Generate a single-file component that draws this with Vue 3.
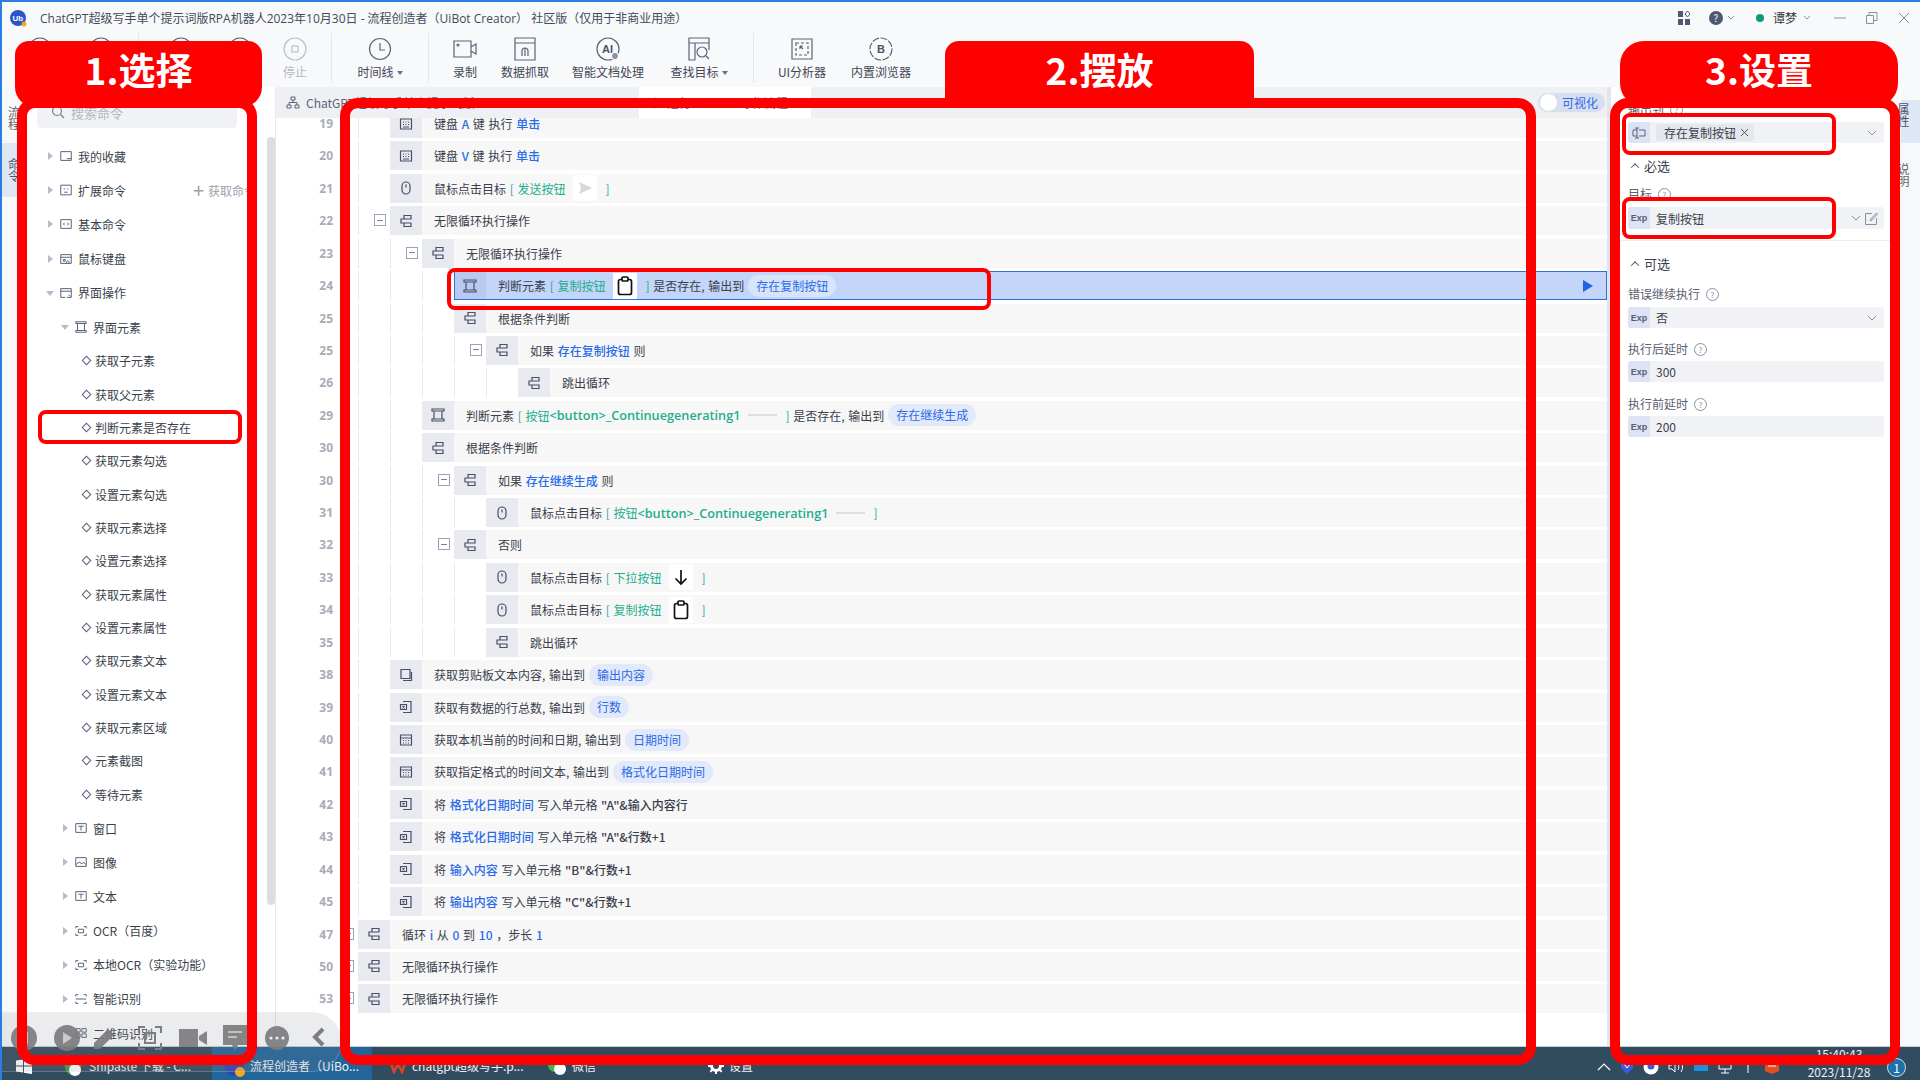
<script setup>
const flowIcons = {
  flow: 'M6 2.5h7v3.5H6zM6 10h7v3.5H6zM6 6H3v4h3',
  el: 'M2 2h12v2H2zM2 12h12v2H2zM4 4v8M12 4v8',
  mouse: 'M8 2a4 4 0 0 1 4 4v4a4 4 0 0 1-8 0V6a4 4 0 0 1 4-4zM8 4.5V7.5',
  kb: 'M2.5 3h11v10h-11zM5 6h1M7.5 6h1M10 6h1M5 8.5h1M7.5 8.5h1M10 8.5h1M5 11h6',
  cal: 'M2.5 3h11v10h-11zM2.5 6h11M5 8.5h1M7.5 8.5h1M10 8.5h1M5 11h1M7.5 11h1M10 11h1',
  copy: 'M3 2.5h9v9H3zM13.5 5v8.5H5',
  excel: 'M5 2.5h8v11H5M2.5 5.5h6v5h-6zM4.5 6.8l2 2.5M6.5 6.8l-2 2.5',
  folder: 'M2 3h12v10H2zM9 11h5',
  chat: 'M2 2.5h12v11H2zM6 6v1.5M10 6v1.5M6 10.5h4',
  code: 'M2 3h12v10H2zM6.5 6.5L5 8l1.5 1.5M9.5 6.5L11 8l-1.5 1.5',
  win: 'M2 3h12v10H2zM2 6h12M5 8.5h2v2H5zM10 10a1.5 1.5 0 1 0 .01 0',
  window: 'M2 3h12v10H9M2 3v10h5M2 6h12M11 10l2 2',
  img: 'M2 3h12v10H2zM2 11l4-3 3 2 2-1.5 3 2.5',
  text: 'M2 3h12v10H2zM5 6h6M8 6v5',
  scan: 'M2 5V3h3M11 3h3v2M2 11v2h3M14 11v2h-3M5 6h6v4H5z',
  aiscan: 'M2 5V3h3M11 3h3v2M2 11v2h3M14 11v2h-3M2 8h12',
  qr: 'M2 3h5v4H2zM9 3h5v4H9zM2 9h5v4H2zM9 9h5v4H9z',
}

const g = t => ({ t, k: 'g' })
const gl = t => ({ t, k: 'g latin' })
const b = t => ({ t, k: 'b' })
const d = t => ({ t, k: 'd' })
const pill = t => ({ t, k: 'pill' })
const thumb = kind => ({ thumb: kind })
const p = t => ({ t })

const rows = [
  { n: 19, d: 1, i: 'kb', parts: [p('键盘 '), b('A'), p(' 键 执行 '), b('单击')] },
  { n: 20, d: 1, i: 'kb', parts: [p('键盘 '), b('V'), p(' 键 执行 '), b('单击')] },
  { n: 21, d: 1, i: 'mouse', parts: [p('鼠标点击目标 '), g('[ 发送按钮'), thumb('send'), g(']')] },
  { n: 22, d: 1, i: 'flow', fold: true, parts: [p('无限循环执行操作')] },
  { n: 23, d: 2, i: 'flow', fold: true, parts: [p('无限循环执行操作')] },
  { n: 24, d: 3, i: 'el', sel: true, parts: [p('判断元素 '), g('[ 复制按钮'), thumb('clip'), g(']'), p(' 是否存在, 输出到'), pill('存在复制按钮')] },
  { n: 25, d: 3, i: 'flow', parts: [p('根据条件判断')] },
  { n: 25, d: 4, i: 'flow', fold: true, parts: [p('如果 '), b('存在复制按钮'), p(' 则')] },
  { n: 26, d: 5, i: 'flow', parts: [p('跳出循环')] },
  { n: 29, d: 2, i: 'el', parts: [p('判断元素 '), g('[ 按钮'), gl('<button>_Continuegenerating1'), thumb('dash'), g(']'), p(' 是否存在, 输出到'), pill('存在继续生成')] },
  { n: 30, d: 2, i: 'flow', parts: [p('根据条件判断')] },
  { n: 30, d: 3, i: 'flow', fold: true, parts: [p('如果 '), b('存在继续生成'), p(' 则')] },
  { n: 31, d: 4, i: 'mouse', parts: [p('鼠标点击目标 '), g('[ 按钮'), gl('<button>_Continuegenerating1'), thumb('dash'), g(']')] },
  { n: 32, d: 3, i: 'flow', fold: true, parts: [p('否则')] },
  { n: 33, d: 4, i: 'mouse', parts: [p('鼠标点击目标 '), g('[ 下拉按钮'), thumb('down'), g(']')] },
  { n: 34, d: 4, i: 'mouse', parts: [p('鼠标点击目标 '), g('[ 复制按钮'), thumb('clip'), g(']')] },
  { n: 35, d: 4, i: 'flow', parts: [p('跳出循环')] },
  { n: 38, d: 1, i: 'copy', parts: [p('获取剪贴板文本内容, 输出到'), pill('输出内容')] },
  { n: 39, d: 1, i: 'excel', parts: [p('获取有数据的行总数, 输出到'), pill('行数')] },
  { n: 40, d: 1, i: 'cal', parts: [p('获取本机当前的时间和日期, 输出到'), pill('日期时间')] },
  { n: 41, d: 1, i: 'cal', parts: [p('获取指定格式的时间文本, 输出到'), pill('格式化日期时间')] },
  { n: 42, d: 1, i: 'excel', parts: [p('将 '), b('格式化日期时间'), p(' 写入单元格 '), d('"A"&输入内容行')] },
  { n: 43, d: 1, i: 'excel', parts: [p('将 '), b('格式化日期时间'), p(' 写入单元格 '), d('"A"&行数+1')] },
  { n: 44, d: 1, i: 'excel', parts: [p('将 '), b('输入内容'), p(' 写入单元格 '), d('"B"&行数+1')] },
  { n: 45, d: 1, i: 'excel', parts: [p('将 '), b('输出内容'), p(' 写入单元格 '), d('"C"&行数+1')] },
  { n: 47, d: 0, i: 'flow', fold: true, parts: [p('循环 '), b('i'), p(' 从 '), b('0'), p(' 到 '), b('10'), p(' ，步长 '), b('1')] },
  { n: 50, d: 0, i: 'flow', fold: true, parts: [p('无限循环执行操作')] },
  { n: 53, d: 0, i: 'flow', fold: true, parts: [p('无限循环执行操作')] },
]

const tree = [
  { t: '我的收藏', i: 'folder', lvl: 0, arrow: 'r' },
  { t: '扩展命令', i: 'chat', lvl: 0, arrow: 'r', extra: true },
  { t: '基本命令', i: 'code', lvl: 0, arrow: 'r' },
  { t: '鼠标键盘', i: 'win', lvl: 0, arrow: 'r' },
  { t: '界面操作', i: 'window', lvl: 0, arrow: 'd' },
  { t: '界面元素', i: 'el', lvl: 1, arrow: 'd' },
  ...['获取子元素', '获取父元素', '判断元素是否存在', '获取元素勾选', '设置元素勾选', '获取元素选择', '设置元素选择',
    '获取元素属性', '设置元素属性', '获取元素文本', '设置元素文本', '获取元素区域', '元素截图', '等待元素'].map(t => ({ t, leaf: true })),
  { t: '窗口', i: 'text', lvl: 1, arrow: 'r' },
  { t: '图像', i: 'img', lvl: 1, arrow: 'r' },
  { t: '文本', i: 'text', lvl: 1, arrow: 'r' },
  { t: 'OCR（百度）', i: 'scan', lvl: 1, arrow: 'r' },
  { t: '本地OCR（实验功能）', i: 'scan', lvl: 1, arrow: 'r' },
  { t: '智能识别', i: 'aiscan', lvl: 1, arrow: 'r' },
  { t: '二维码识别', i: 'qr', lvl: 1, arrow: 'r' },
]

// the first four buttons sit behind the red label, only their tops show
const tools = [
  { w: 60, kind: 'play' },
  { w: 62, kind: 'play' },
  { sep: 12 },
  { w: 74, kind: 'play' },
  { w: 44, kind: 'play' },
  { w: 66, t: '停止', kind: 'stop', off: true },
  { sep: 6 },
  { w: 92, t: '时间线', kind: 'clock', caret: true },
  { sep: 4 },
  { w: 70, t: '录制', kind: 'video' },
  { w: 50, t: '数据抓取', kind: 'grab' },
  { w: 116, t: '智能文档处理', kind: 'ai' },
  { w: 66, t: '查找目标', kind: 'find', caret: true },
  { sep: 42 },
  { w: 56, t: 'UI分析器', kind: 'ui' },
  { w: 102, t: '内置浏览器', kind: 'browser' },
]
</script>

<template>
  <div class="app">
    <header class="titlebar">
      <svg class="logo" viewBox="0 0 18 18" width="18" height="18">
        <circle cx="9" cy="9" r="8" fill="#2a55c8" />
        <text x="3.5" y="12" font-size="8" font-weight="700" fill="#fff" font-family="Liberation Sans">Ub</text>
        <circle cx="15" cy="15" r="2.5" fill="#f5a623" />
      </svg>
      <span class="title">ChatGPT超级写手单个提示词版RPA机器人2023年10月30日 - 流程创造者（UiBot Creator） 社区版（仅用于非商业用途）</span>
      <div class="win-tools">
        <svg width="14" height="18" viewBox="0 0 14 18"><path d="M1 2h5v6H1zM1 10h5v6H1zM8 10h5v6H8z" fill="#4f5a70" /><path d="M10.5 2l2.5 3-2.5 3-2.5-3z" fill="none" stroke="#4f5a70" /></svg>
        <span class="help">?</span>
        <svg class="chev" width="8" height="6" viewBox="0 0 8 6"><path d="M1 1l3 3 3-3" fill="none" stroke="#8a90a0" /></svg>
        <span class="dot"></span>
        <span class="user">谭梦</span>
        <svg class="chev after-user" width="8" height="6" viewBox="0 0 8 6"><path d="M1 1l3 3 3-3" fill="none" stroke="#8a90a0" /></svg>
        <svg class="ctl-min" width="12" height="12" viewBox="0 0 12 12"><path d="M0 6h12" stroke="#8a90a0" /></svg>
        <svg class="ctl" width="12" height="12" viewBox="0 0 12 12"><path d="M.5 3.5h7v8h-7zM3 3.5V.5h8v8H7.5" fill="none" stroke="#8a90a0" /></svg>
        <svg class="ctl" width="12" height="12" viewBox="0 0 12 12"><path d="M1 1l10 10M11 1L1 11" stroke="#8a90a0" /></svg>
      </div>
    </header>

    <nav class="toolbar">
      <template v-for="(tool, idx) in tools" :key="idx">
        <div v-if="tool.sep" class="sep-wrap" :style="{ width: tool.sep + 'px' }"><i class="sep"></i></div>
        <div v-else class="tool" :class="{ off: tool.off }" :style="{ width: tool.w + 'px' }">
          <svg class="tool-icon" width="26" height="26" viewBox="0 0 26 26" fill="none" stroke="#5a6478" stroke-width="1.2">
            <template v-if="tool.kind === 'play'"><circle cx="13" cy="13" r="11" /><path d="M10 8l8 5-8 5z" /></template>
            <template v-else-if="tool.kind === 'stop'"><circle cx="13" cy="13" r="11" stroke="#bcc0c8" /><rect x="10" y="10" width="6" height="6" stroke="#bcc0c8" /></template>
            <template v-else-if="tool.kind === 'clock'"><circle cx="13" cy="13" r="10.5" /><path d="M13 7v7h5" /></template>
            <template v-else-if="tool.kind === 'video'"><path d="M2 5h17v16H2zM19 11l5-3v10l-5-3" /><circle cx="6" cy="9" r="1" /></template>
            <template v-else-if="tool.kind === 'grab'"><path d="M3 2h20v22H3zM3 7h20M13 12a3 3 0 0 0-3 3v5M13 12a3 3 0 0 1 3 3v5M13 12v8" /></template>
            <template v-else-if="tool.kind === 'ai'"><circle cx="13" cy="13" r="11" /><text x="7" y="17" font-size="11" font-weight="700" fill="#4a5468" stroke="none" font-family="Liberation Sans">AI</text><circle cx="20" cy="20" r="3.5" fill="#8a90a0" stroke="#fff" /></template>
            <template v-else-if="tool.kind === 'find'"><path d="M3 2h20v5H3zM3 7v17h6M9 7v17M23 7v7" /><circle cx="16" cy="16" r="5" /><path d="M20 20l3 3" /></template>
            <template v-else-if="tool.kind === 'ui'"><path d="M3 3h20v20H3z" /><path d="M7 7h12v12H7z" stroke-dasharray="3 2" /><path d="M11 10l3 3M11 10h3M11 10v3" /></template>
            <template v-else><circle cx="13" cy="13" r="11" stroke-dasharray="7 1.5" /><text x="9" y="17" font-size="11" font-weight="700" fill="#4a5468" stroke="none" font-family="Liberation Sans">B</text></template>
          </svg>
          <span v-if="tool.t" class="tool-label">{{ tool.t }}<i v-if="tool.caret" class="caret"></i></span>
        </div>
      </template>
    </nav>

    <div class="body">
      <aside class="rail">
        <span class="rail-tab">流程</span>
        <span class="rail-tab active">命令</span>
      </aside>

      <section class="sidebar">
        <div class="search">
          <svg width="14" height="14" viewBox="0 0 14 14" fill="none" stroke="#7a8090" stroke-width="1.2"><circle cx="6" cy="6" r="4.5" /><path d="M9.5 9.5l3.5 3.5" /></svg>
          <span>搜索命令</span>
        </div>
        <ul class="tree">
          <template v-for="item in tree" :key="item.t">
            <li v-if="item.leaf" class="leaf"><i class="diamond"></i>{{ item.t }}</li>
            <li v-else class="cat" :class="'lvl' + item.lvl">
              <i class="arrow" :class="item.arrow"></i>
              <svg width="14" height="14" viewBox="0 0 16 16" fill="none" stroke="#565e78" stroke-width="1.1"><path :d="flowIcons[item.i]" /></svg>
              <span>{{ item.t }}</span>
              <span v-if="item.extra" class="extra"><b>+</b>获取命令</span>
            </li>
          </template>
        </ul>
        <i class="scroll"></i>
      </section>

      <main class="main">
        <div class="tabs">
          <div class="tab">
            <svg width="14" height="14" viewBox="0 0 14 14" fill="none" stroke="#5a6478"><path d="M5 1h4v3H5zM1 9h4v3H1zM9 9h4v3H9zM7 4v2.5M3 9V6.5h8V9" /></svg>
            <span>ChatGPT超级写手单个提示词版</span>
          </div>
          <div class="tab active">
            <svg width="12" height="12" viewBox="0 0 14 14" fill="none" stroke="#5a6478"><path d="M7 1l5 6-5 6-5-6z" /></svg>
            <span>运行ChatGPT写作流程</span>
          </div>
          <div class="toggle"><i class="knob"></i><span>可视化</span></div>
        </div>
        <div class="list-clip">
          <div class="list">
            <div v-for="(row, ri) in rows" :key="ri" class="row" :class="{ sel: row.sel }">
              <span class="num">{{ row.n }}</span>
              <div class="indent">
                <i v-for="k in row.d" :key="k" class="guide"></i>
                <span v-if="row.fold" class="fold"><i></i></span>
              </div>
              <div class="line">
                <div class="cell">
                  <svg width="16" height="16" viewBox="0 0 16 16" fill="none" stroke="#474f6b" stroke-width="1.2"><path :d="flowIcons[row.i]" /></svg>
                </div>
                <div class="txt">
                  <template v-for="(part, pi) in row.parts" :key="pi">
                    <span v-if="part.thumb" class="thumb" :class="part.thumb">
                      <svg v-if="part.thumb === 'clip'" width="16" height="20" viewBox="0 0 16 20" fill="none" stroke="#111" stroke-width="1.7"><rect x="1.5" y="3.5" width="13" height="15" rx="2" /><rect x="5" y="1" width="6" height="4" rx="1" fill="#fff" /></svg>
                      <svg v-else-if="part.thumb === 'down'" width="16" height="18" viewBox="0 0 16 18" fill="none" stroke="#111" stroke-width="1.7"><path d="M8 2v14M2.5 10.5L8 16l5.5-5.5" /></svg>
                      <svg v-else-if="part.thumb === 'send'" width="14" height="12" viewBox="0 0 14 12"><path d="M1 0l13 6-13 6 2-6z" fill="#d8d8dc" /></svg>
                      <i v-else></i>
                    </span>
                    <span v-else :class="part.k">{{ part.t }}</span>
                  </template>
                </div>
                <svg v-if="row.sel" class="run" width="12" height="14" viewBox="0 0 12 14"><path d="M1 1l10 6-10 6z" fill="#1f63e0" /></svg>
              </div>
            </div>
          </div>
        </div>
      </main>

      <aside class="props">
        <div class="props-inner">
          <div class="label first">输出到<i class="q">?</i></div>
          <div class="input">
            <span class="pre"><svg width="14" height="14" viewBox="0 0 14 14" fill="none" stroke="#5a6478"><path d="M5 2v10M3 2h4M3 12h4M5 4H1v6h4M7 4h6v6H7" /></svg></span>
            <span class="chip">存在复制按钮<svg width="9" height="9" viewBox="0 0 9 9"><path d="M1 1l7 7M8 1L1 8" stroke="#555" /></svg></span>
            <svg class="i-chev" width="10" height="6" viewBox="0 0 10 6"><path d="M1 1l4 4 4-4" fill="none" stroke="#8a90a0" /></svg>
          </div>
          <div class="head must"><i class="up"></i>必选</div>
          <div class="label tgt">目标<i class="q">?</i></div>
          <div class="input tall">
            <span class="pre">Exp</span>
            <span class="val">复制按钮</span>
            <svg class="i-chev near" width="10" height="6" viewBox="0 0 10 6"><path d="M1 1l4 4 4-4" fill="none" stroke="#8a90a0" /></svg>
            <svg class="edit" width="13" height="13" viewBox="0 0 13 13" fill="none" stroke="#8a90a0"><path d="M11.5 6v6.500h-11v-11H7M5 8l6.500-7 1 1-6.500 7z" /></svg>
          </div>
          <hr class="divider" />
          <div class="head opt"><i class="up"></i>可选</div>
          <div class="label err">错误继续执行<i class="q">?</i></div>
          <div class="input">
            <span class="pre">Exp</span>
            <span class="val">否</span>
            <svg class="i-chev" width="10" height="6" viewBox="0 0 10 6"><path d="M1 1l4 4 4-4" fill="none" stroke="#8a90a0" /></svg>
          </div>
          <div class="label after">执行后延时<i class="q">?</i></div>
          <div class="input tight"><span class="pre">Exp</span><span class="val">300</span></div>
          <div class="label before">执行前延时<i class="q">?</i></div>
          <div class="input tight"><span class="pre">Exp</span><span class="val">200</span></div>
        </div>
        <div class="prop-rail">
          <span class="rail-tab active">属性</span>
          <span class="rail-tab">说明</span>
        </div>
      </aside>
    </div>

    <footer class="taskbar">
      <svg class="start" width="16" height="16" viewBox="0 0 16 16"><path d="M0 2.500l7-1v6H0zM8 1.300l8-1.200V7.500H8zM0 8.500h7v6l-7-1zM8 8.500h8V16l-8-1.200z" fill="#fff" /></svg>
      <div class="task snip"><svg width="22" height="22" viewBox="0 0 22 22"><circle cx="11" cy="9" r="9" fill="#c8392b" /><circle cx="11" cy="12" r="8" fill="#3a9a4a" /><circle cx="13" cy="15" r="6" fill="#fff" /></svg><span>Snipaste 下载 - C...</span></div>
      <div class="task on"><svg width="22" height="22" viewBox="0 0 22 22"><circle cx="11" cy="11" r="10" fill="#2a47b8" /><circle cx="17" cy="17" r="5" fill="#f5a623" /></svg><span>流程创造者（UiBo...</span></div>
      <div class="task doc"><svg width="18" height="16" viewBox="0 0 18 16"><path d="M1 2l4 12 4-8 4 8 4-12" fill="none" stroke="#d9442b" stroke-width="2.500" /></svg><span>chatgpt超级写手.p...</span></div>
      <div class="task chat"><svg width="20" height="20" viewBox="0 0 20 20"><circle cx="8" cy="9" r="7" fill="#3db54a" /><circle cx="13" cy="13" r="6" fill="#fff" /></svg><span>微信</span></div>
      <div class="task gear"><svg width="16" height="16" viewBox="0 0 16 16"><circle cx="8" cy="8" r="4.500" fill="none" stroke="#fff" stroke-width="3" /><path d="M8 0v3M8 13v3M0 8h3M13 8h3M2.300 2.300l2 2M11.700 11.700l2 2M13.700 2.300l-2 2M4.300 11.700l-2 2" stroke="#fff" stroke-width="2" /></svg><span>设置</span></div>
      <div class="tray">
        <svg width="14" height="8" viewBox="0 0 14 8"><path d="M1 7l6-6 6 6" fill="none" stroke="#fff" stroke-width="1.200" /></svg>
        <svg width="14" height="16" viewBox="0 0 14 16"><path d="M1 2h12v7l-6 6-6-6z" fill="#3b5bdb" /><path d="M4 5l3 4 3-4" fill="none" stroke="#fff" /></svg>
        <svg width="16" height="16" viewBox="0 0 16 16"><circle cx="8" cy="8" r="7.500" fill="#fff" /><circle cx="8" cy="7" r="3.500" fill="#3b5bdb" /></svg>
        <svg width="16" height="14" viewBox="0 0 16 14" fill="none" stroke="#fff"><path d="M1 5h3l3-3v10L4 9H1zM10 4c1 2 1 4 0 6M13 2c2 3 2 7 0 10" /></svg>
        <svg width="16" height="14" viewBox="0 0 16 14"><path d="M1 3h14v8H1z" fill="#1e90d8" /></svg>
        <svg width="14" height="14" viewBox="0 0 14 14" fill="none" stroke="#fff"><path d="M1 2h12v7H1zM7 9v4M3 13h8" /></svg>
        <svg width="14" height="14" viewBox="0 0 14 14" fill="none" stroke="#fff"><path d="M1 4h12M7 1v12" /></svg>
        <svg width="16" height="16" viewBox="0 0 16 16"><path d="M1 3h14v9l-7 3-7-3z" fill="#e0501f" /><path d="M4 7h8" stroke="#fff" /></svg>
        <div class="clock"><span>15:40:43</span><span>2023/11/28</span></div>
        <span class="notify">1</span>
      </div>
    </footer>

    <div class="floatbar">
      <svg class="fb-ico" width="28" height="28" viewBox="0 0 28 28"><circle cx="14" cy="14" r="13" /><path d="M18 8l-8 6 8 6z" fill="#c8c8c8" /></svg>
      <svg class="fb-ico" width="28" height="28" viewBox="0 0 28 28"><circle cx="14" cy="14" r="13" /><path d="M10 8l9 6-9 6z" fill="#c8c8c8" /></svg>
      <svg class="fb-ico" width="26" height="26" viewBox="0 0 26 26"><path d="M3 18L17 4l6 6-14 14H3z" /></svg>
      <svg class="fb-line" width="26" height="26" viewBox="0 0 26 26"><path d="M2 8V2h6M18 2h6v6M2 18v6h6M24 18v6h-6M8 8h10v10H8z" /></svg>
      <svg class="fb-ico" width="30" height="22" viewBox="0 0 30 22"><path d="M1 2h19v18H1zM21 9l8-5v14l-8-5z" /></svg>
      <svg class="fb-ico" width="26" height="28" viewBox="0 0 26 28"><path d="M1 1h24v20H16l-3 5-3-5H1z" /><path d="M6 8h14M6 13h9" stroke="#fff" fill="none" /></svg>
      <svg class="fb-ico" width="26" height="26" viewBox="0 0 26 26"><circle cx="13" cy="13" r="12" /><circle cx="7" cy="13" r="1.600" fill="#eee" /><circle cx="13" cy="13" r="1.600" fill="#eee" /><circle cx="19" cy="13" r="1.600" fill="#eee" /></svg>
      <svg class="fb-back" width="14" height="22" viewBox="0 0 14 22"><path d="M11 3l-8 8 8 8" /></svg>
    </div>

    <!-- red annotations drawn over the screenshot -->
    <div class="flag f1">1.选择</div>
    <div class="flag f2">2.摆放</div>
    <div class="flag f3">3.设置</div>
    <i class="frame fr1"></i>
    <i class="frame fr2"></i>
    <i class="frame fr3"></i>
    <i class="mark m1"></i>
    <i class="mark m2"></i>
    <i class="mark m3"></i>
    <i class="mark m4"></i>
  </div>
</template>

<style>
html, body { margin: 0; background: #fff; overflow: hidden; }
</style>

<style scoped>
.app {
  position: relative;
  width: 1920px;
  height: 1080px;
  overflow: hidden;
  display: flex;
  flex-direction: column;
  background: #f8f9fb;
  font-family: "Noto Sans CJK SC", "Noto Sans", sans-serif;
  font-size: 12px;
  color: #3a3f4b;
  box-sizing: border-box;
  border-top: 2px solid #2a7de1;
  border-left: 2px solid #2a7de1;
}
i { font-style: normal; display: block; }

.titlebar { height: 31px; flex: none; display: flex; align-items: center; padding-left: 7px; }
.logo { margin-right: 13px; }
.title { color: #444a58; white-space: pre; font-size: 12px; font-family: "Open Sans", "Noto Sans CJK SC", sans-serif; }
.win-tools { margin-left: auto; display: flex; align-items: center; height: 100%; padding-right: 10px; }
.help { width: 14px; height: 14px; border-radius: 50%; background: #4f5a70; color: #fff; font-size: 10px; line-height: 14px; text-align: center; margin-left: 18px; }
.chev { margin-left: 4px; }
.chev.after-user { margin-left: 6px; }
.dot { width: 8px; height: 8px; border-radius: 50%; background: #0d9b76; margin-left: 21px; }
.user { margin-left: 9px; font-size: 12px; color: #333; }
.ctl-min { margin-left: 23px; }
.ctl { margin-left: 20px; }

.toolbar { height: 54px; flex: none; display: flex; padding-left: 8px; }
.tool { display: flex; flex-direction: column; align-items: center; flex: none; }
.tool-icon { margin-top: 3px; }
.tool-label { margin-top: 1px; font-size: 12px; line-height: 18px; color: #3f4655; white-space: nowrap; }
.tool.off .tool-label { color: #b4b8c0; }
.caret { display: inline-block; width: 0; height: 0; margin-left: 3px; vertical-align: 2px; border-left: 3px solid transparent; border-right: 3px solid transparent; border-top: 4px solid #6a7080; }
.sep-wrap { display: flex; justify-content: center; flex: none; }
.sep { width: 1px; height: 50px; background: #e6e7eb; }

.body { flex: 1; min-height: 0; display: flex; }

.rail { width: 24px; flex: none; background: #f7f8fa; display: flex; flex-direction: column; align-items: stretch; }
.rail-tab { writing-mode: vertical-rl; font-size: 12px; color: #666; text-align: center; display: flex; align-items: center; justify-content: center; }
.rail .rail-tab { height: 40px; margin-top: 11px; width: 24px; }
.rail .rail-tab.active { height: 54px; margin-top: 5px; background: #dfe7f7; color: #4a5468; }

.sidebar { width: 249px; flex: none; position: relative; background: #fff; border-right: 1px solid #e6e7ea; }
.search { margin: 13px 0 0 11px; width: 200px; height: 28px; box-sizing: border-box; padding: 0 0 4px 14px; background: #f1f2f5; border-radius: 4px; display: flex; align-items: center; gap: 6px; color: #b4b8c2; font-size: 13px; }
.tree { list-style: none; margin: 11px 0 0; padding: 0; }
.cat { height: 34.2px; display: flex; align-items: center; white-space: nowrap; color: #3a3f4b; position: relative; }
.cat svg { margin: 0 5px; flex: none; }
.cat.lvl0 { padding-left: 20px; }
.cat.lvl1 { padding-left: 35px; }
.arrow { width: 8px; height: 8px; flex: none; position: relative; }
.arrow::before { content: ""; position: absolute; width: 0; height: 0; }
.arrow.r::before { left: 2px; top: 0; border-top: 4px solid transparent; border-bottom: 4px solid transparent; border-left: 5px solid #b8bcc6; }
.arrow.d::before { left: 0; top: 2px; border-left: 4px solid transparent; border-right: 4px solid transparent; border-top: 5px solid #b8bcc6; }
.extra { position: absolute; left: 167px; color: #9aa0ac; display: flex; align-items: center; gap: 4px; }
.extra b { font-weight: 400; font-size: 20px; line-height: 1; }
.leaf { height: 33.35px; display: flex; align-items: center; padding-left: 57px; color: #3a3f4b; white-space: nowrap; }
.diamond { width: 5px; height: 5px; border: 1px solid #565e78; transform: rotate(45deg); margin-right: 5px; flex: none; }
.scroll { position: absolute; right: 0; top: 50px; width: 8px; height: 768px; background: #dcdde0; border-radius: 4px; }

.main { width: 1331px; flex: none; background: #fff; display: flex; flex-direction: column; min-height: 0; }
.tabs { height: 31px; flex: none; background: #eff0f3; display: flex; align-items: flex-start; position: relative; color: #5a6478; }
.tab { height: 31px; display: flex; align-items: center; gap: 6px; padding-left: 10px; width: 363px; box-sizing: border-box; white-space: nowrap; overflow: hidden; }
.tab.active { background: #fff; width: 172px; }
.toggle { position: absolute; right: 2px; top: 6px; width: 67px; height: 19px; border-radius: 10px; background: #d7def0; display: flex; align-items: center; box-sizing: border-box; padding-left: 2px; color: #2a6be8; gap: 5px; }
.knob { width: 17px; height: 17px; border-radius: 50%; background: #fff; }

.list-clip { flex: 1; min-height: 0; overflow: hidden; }
.list { margin-top: -9px; }
.row { height: 29px; margin-bottom: 3.43px; display: flex; align-items: stretch; }
.num { width: 57px; flex: none; text-align: right; color: #a8acb6; line-height: 29px; font-weight: 700; font-family: "Noto Sans", sans-serif; font-size: 12px; }
.indent { flex: none; padding-left: 25px; display: flex; position: relative; }
.guide { width: 31px; border-left: 1px solid #e6e7ea; }
.fold { position: absolute; right: 4px; top: 8px; width: 12px; height: 12px; box-sizing: border-box; border: 1px solid #9aa4b8; background: #fff; display: flex; align-items: center; justify-content: center; }
.fold i { width: 6px; height: 1px; background: #7a8498; }
.line { flex: 1; min-width: 0; display: flex; align-items: center; background: #f7f7f8; position: relative; }
.cell { width: 32px; align-self: stretch; flex: none; background: #e9eaef; display: flex; align-items: center; justify-content: center; }
.txt { padding-left: 12px; display: flex; align-items: center; white-space: pre; word-spacing: 1px; color: #3a3f4b; }
.g { color: #1fae8e; }
.latin { font-family: "Open Sans", sans-serif; font-weight: 600; font-size: 12.7px; }
.b { color: #2a6be8; font-weight: 500; }
.d { color: #3a3f4b; font-weight: 500; }
.pill { margin-left: 4px; height: 22px; line-height: 22px; padding: 0 8px; border-radius: 11px; background: #e2e9fa; color: #2a6be8; }
.thumb { margin: 0 8px; background: #fff; width: 24px; height: 26px; display: flex; align-items: center; justify-content: center; }
.thumb.dash { background: transparent; width: 29px; }
.thumb.dash i { width: 29px; height: 2px; background: #dedee2; }
.row.sel .line { background: #c3d5f8; box-shadow: inset 0 0 0 1px #2f6fe0; }
.row.sel .cell { background: #b8cbee; box-shadow: inset 1px 1px 0 #2f6fe0, inset 0 -1px 0 #2f6fe0; }
.row.sel .pill { background: #d9e4fb; }
.run { position: absolute; right: 13px; top: 8px; }

.props { flex: 1; min-width: 0; display: flex; background: #fff; border-left: 4px solid #e4e5e8; box-sizing: border-box; }
.props-inner { width: 290px; flex: none; padding: 0 17px 0 17px; box-sizing: border-box; color: #3a3f4b; }
.label { height: 16px; line-height: 16px; display: flex; align-items: center; gap: 6px; color: #5a6070; }
.label.first { margin-top: 14px; }
.label.tgt { margin-top: 12px; }
.label.err { margin-top: 14px; }
.label.after { margin-top: 13px; }
.label.before { margin-top: 14px; }
.q { width: 11px; height: 11px; border: 1px solid #8a90a0; border-radius: 50%; font-size: 8px; line-height: 11px; text-align: center; color: #8a90a0; }
.input { height: 21px; margin-top: 5px; background: #f1f2f5; border-radius: 3px; display: flex; align-items: center; position: relative; }
.input.tall { height: 22px; }
.input.tight { margin-top: 4px; }
.pre { width: 22px; align-self: stretch; background: #dde3f5; border-radius: 3px 0 0 3px; display: flex; align-items: center; justify-content: center; font-family: "Liberation Sans", sans-serif; font-size: 9px; font-weight: 700; color: #5a6070; flex: none; }
.chip { margin-left: 6px; height: 17px; width: 98px; box-sizing: border-box; padding: 0 5px 0 8px; background: #e5e7ee; border-radius: 3px; display: flex; align-items: center; justify-content: space-between; white-space: nowrap; }
.val { margin-left: 6px; }
.i-chev { position: absolute; right: 7px; top: 8px; }
.i-chev.near { right: 23px; }
.edit { position: absolute; right: 6px; top: 5px; }
.head { height: 16px; line-height: 16px; font-size: 13px; display: flex; align-items: center; color: #3a3f4b; padding-left: 4px; }
.head.must { margin-top: 15px; }
.head.opt { margin-top: 15px; }
.up { width: 5px; height: 5px; border-left: 1px solid #555; border-top: 1px solid #555; transform: rotate(45deg) translate(1px, 1px); margin-right: 6px; }
.divider { margin: 11px 0 0 -7px; width: 271px; border: 0; border-top: 1px solid #eceef1; }
.prop-rail { flex: 1; min-width: 0; display: flex; flex-direction: column; background: #f7f8fa; }
.prop-rail .rail-tab { height: 40px; margin-top: 11px; padding-right: 8px; justify-content: flex-start; align-items: flex-start; padding-top: 9px; box-sizing: border-box; }
.prop-rail .rail-tab.active { height: 43px; margin-top: 13px; background: #dfe7f7; color: #4a5468; padding-top: 3px; }

.taskbar { height: 34px; flex: none; background: #324c5f; border-top: 1px solid #c8ccd0; box-sizing: border-box; margin-left: -2px; display: flex; align-items: center; color: #eef1f4; position: relative; }
.start { position: absolute; left: 16px; top: 11px; }
.task { position: absolute; top: 0; height: 34px; display: flex; align-items: center; gap: 5px; white-space: nowrap; padding-top: 3px; box-sizing: border-box; }
.task.snip { left: 62px; }
.task.on { left: 212px; width: 160px; background: #22659a; padding-left: 11px; }
.task.doc { left: 389px; }
.task.chat { left: 547px; }
.task.gear { left: 708px; }
.tray { position: absolute; left: 1597px; top: 0; height: 34px; display: flex; align-items: center; gap: 9px; padding-top: 6px; box-sizing: border-box; }
.clock { display: flex; flex-direction: column; align-items: center; line-height: 18px; margin: -8px 0 0 17px; width: 66px; }
.notify { width: 17px; height: 17px; border-radius: 50%; background: #1f6fa8; border: 1px solid #cfe0ee; color: #fff; text-align: center; line-height: 17px; font-size: 12px; margin-left: 6px; }

.floatbar { position: absolute; left: -2px; top: 1010px; width: 342px; height: 60px; border-radius: 0 30px 30px 0; background: rgba(130, 138, 146, 0.16); border: 1px solid rgba(255, 255, 255, 0.18); box-sizing: border-box; display: flex; align-items: center; }
.fb-ico { position: absolute; fill: #7d7d7f; opacity: 0.92; }
.fb-line { position: absolute; fill: none; stroke: #7d7d7f; stroke-width: 2; }
.fb-back { position: absolute; left: 311px; top: 13px; fill: none; stroke: #7d7d7f; stroke-width: 4; }
.floatbar svg:nth-child(1) { left: 9px; top: 11px; }
.floatbar svg:nth-child(2) { left: 52px; top: 11px; }
.floatbar svg:nth-child(3) { left: 90px; top: 12px; }
.floatbar svg:nth-child(4) { left: 136px; top: 12px; }
.floatbar svg:nth-child(5) { left: 177px; top: 14px; }
.floatbar svg:nth-child(6) { left: 221px; top: 11px; }
.floatbar svg:nth-child(7) { left: 263px; top: 12px; }

.flag { position: absolute; background: #f00; color: #fff; font-size: 37px; font-weight: 700; display: flex; align-items: center; justify-content: center; top: 39px; height: 66px; box-sizing: border-box; padding-bottom: 10px; }
.f1 { left: 13px; width: 247px; border-radius: 14px 14px 20px 20px; }
.f2 { left: 943px; width: 309px; height: 62px; border-radius: 14px 14px 0 0; padding-bottom: 6px; }
.f3 { left: 1618px; width: 278px; border-radius: 24px; }
.frame { position: absolute; box-sizing: border-box; border: 10px solid #f00; border-radius: 18px; }
.fr1 { left: 15px; top: 96px; width: 240px; height: 967px; }
.fr2 { left: 338px; top: 96px; width: 1196px; height: 967px; }
.fr3 { left: 1608px; top: 96px; width: 290px; height: 967px; }
.mark { position: absolute; box-sizing: border-box; border: 4px solid #f00; border-radius: 8px; }
.m1 { left: 36px; top: 408px; width: 204px; height: 34px; }
.m2 { left: 445px; top: 266px; width: 544px; height: 42px; }
.m3 { left: 1620px; top: 111px; width: 214px; height: 42px; }
.m4 { left: 1620px; top: 195px; width: 214px; height: 42px; }
</style>
